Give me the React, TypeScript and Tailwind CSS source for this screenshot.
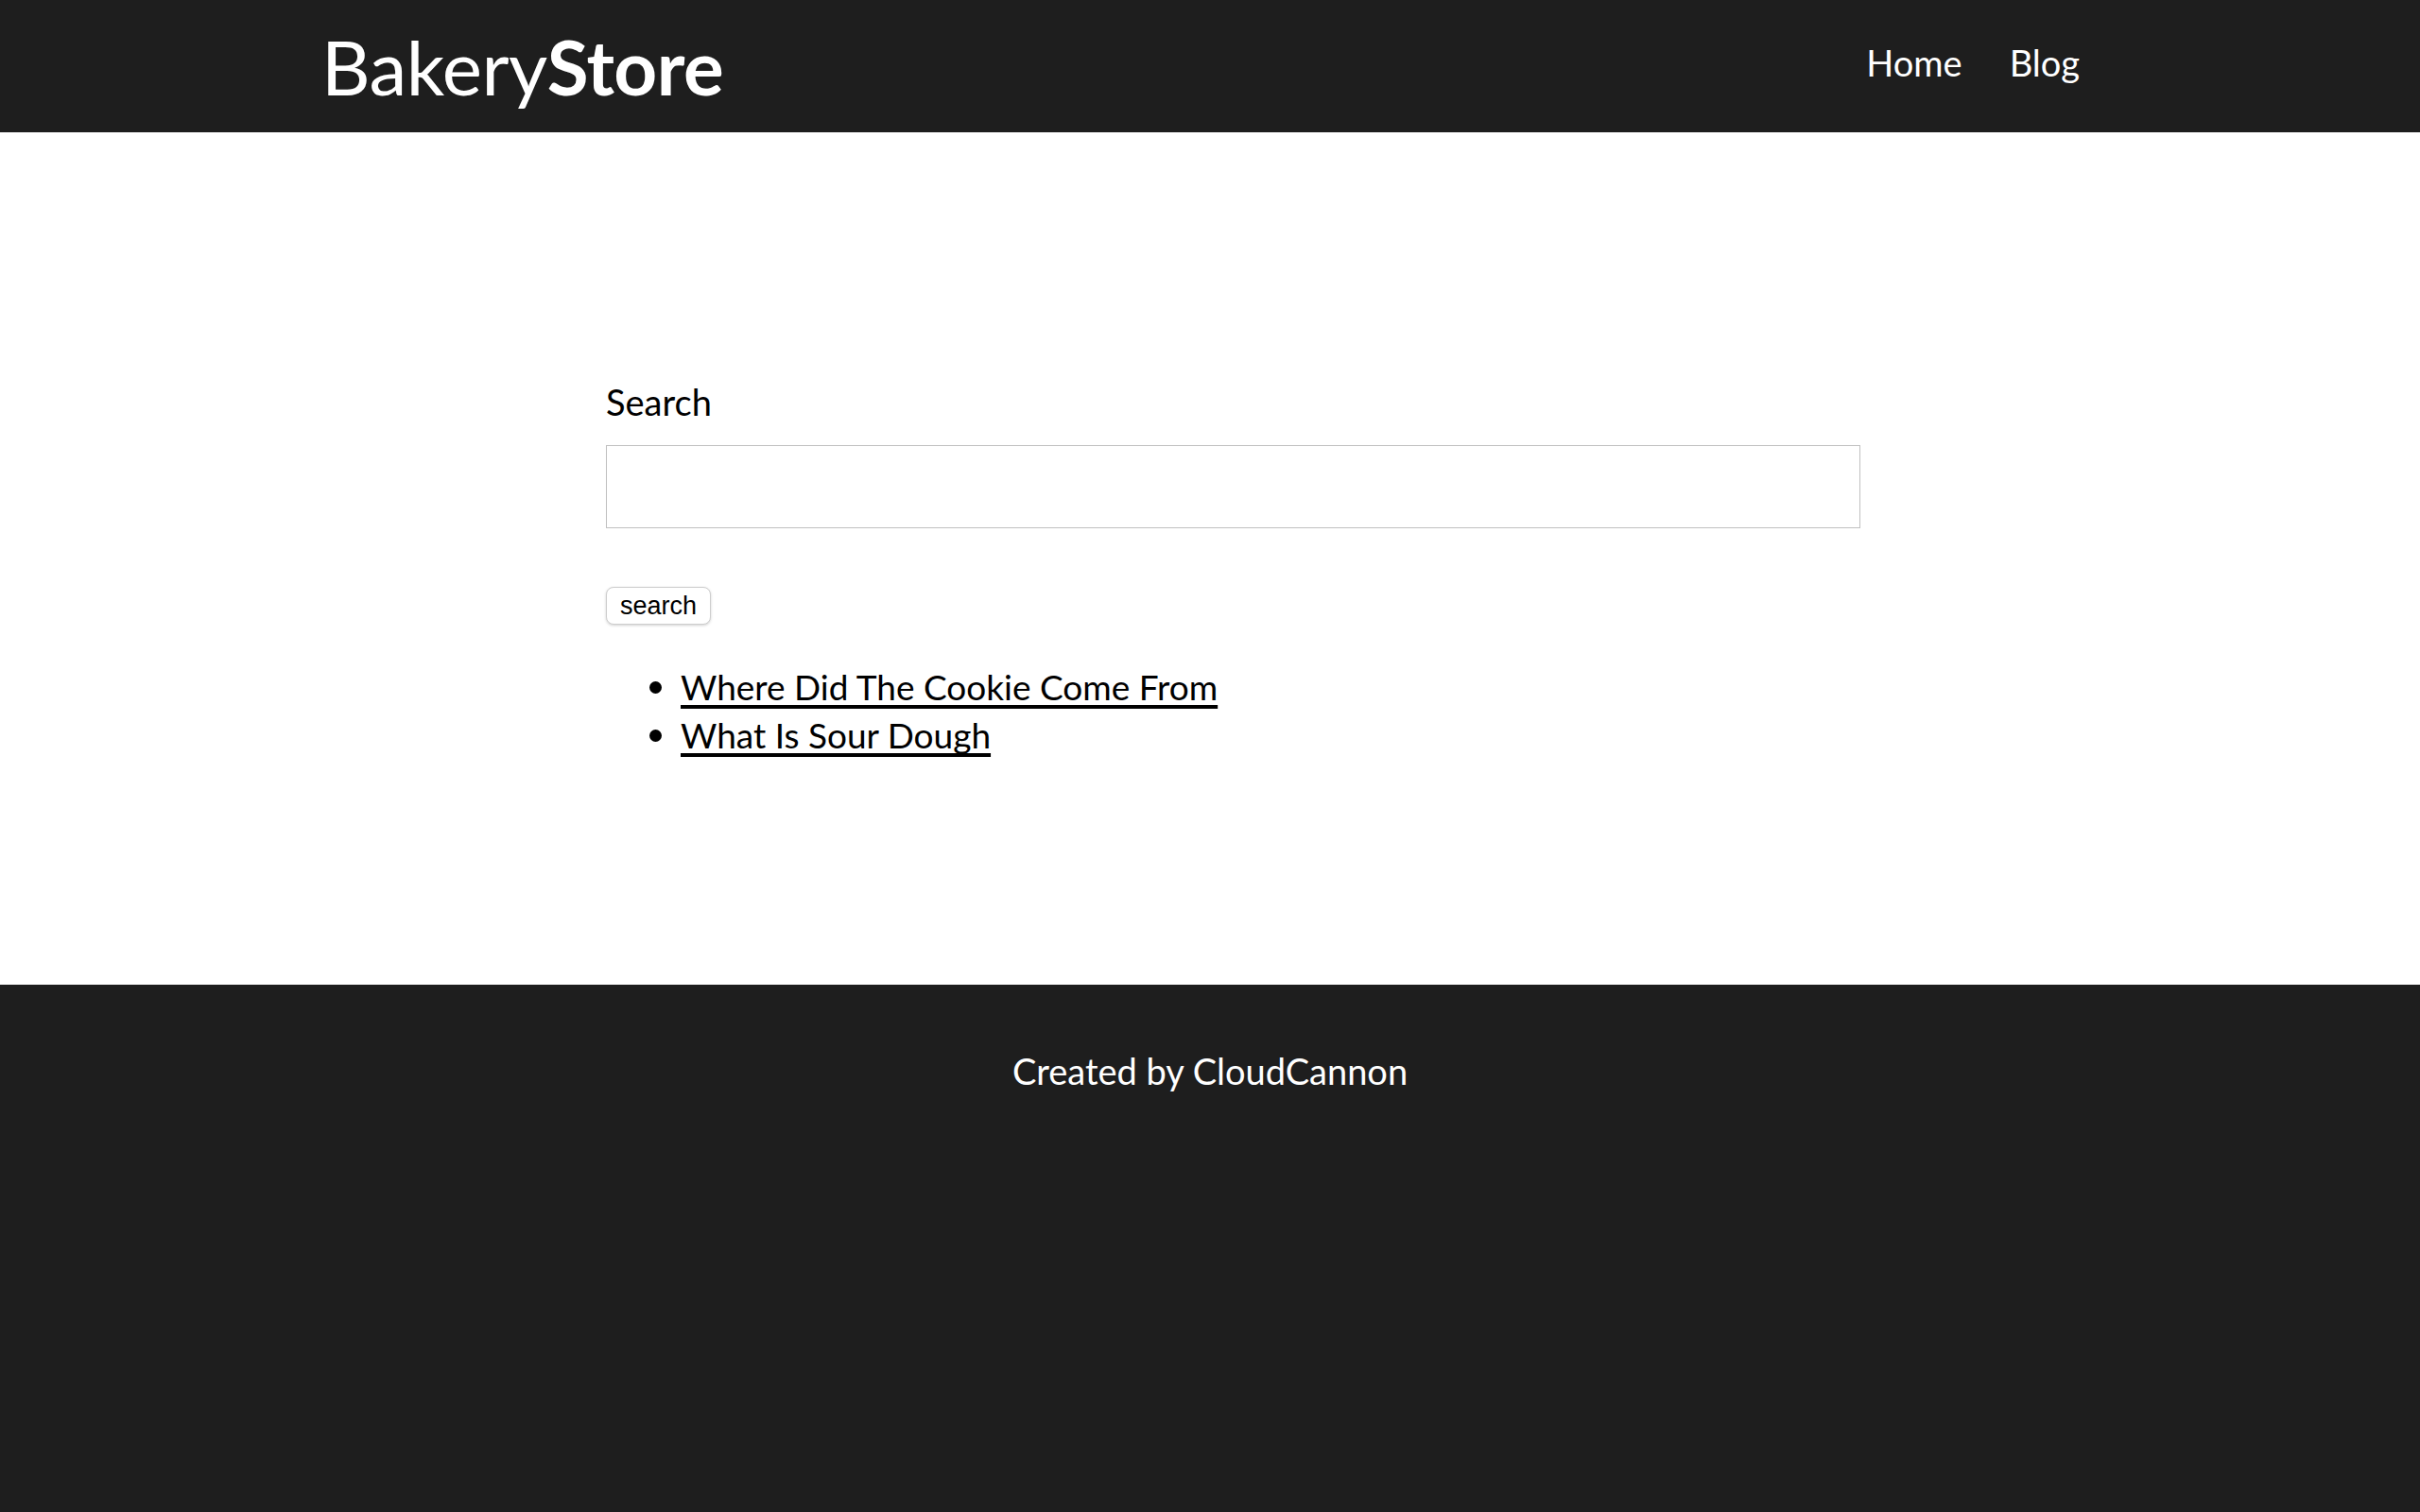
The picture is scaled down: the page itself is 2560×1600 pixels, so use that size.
export default function App() {
  const posts = ["Where Did The Cookie Come From", "What Is Sour Dough"];

  return (
    <div className="flex min-h-[1600px] flex-col bg-white font-['Lato',sans-serif]">
      {/* Header */}
      <header className="flex h-[140px] items-center justify-between bg-[#1e1e1e] pl-[340px] pr-[360px] text-white">
        <a href="#" className="text-[80px] leading-none tracking-[-0.5px]">
          Bakery<strong className="font-bold">Store</strong>
        </a>
        <nav className="flex gap-[50px] pb-[8px] text-[38px] leading-none">
          <a href="#">Home</a>
          <a href="#">Blog</a>
        </nav>
      </header>

      {/* Search */}
      <main className="h-[902px] pl-[641px] pt-[266px]">
        <label className="block text-[38px] leading-none text-black">Search</label>
        <input
          type="text"
          className="mt-[27px] block h-[88px] w-[1327px] border border-[#c0c0c0] bg-white px-4 text-[30px] outline-none"
        />
        <button className="mt-[62px] flex h-[40px] w-[111px] items-center justify-center rounded-[8px] border border-[#cdcdcd] bg-white font-['Liberation_Sans',sans-serif] text-[27px] leading-none text-black shadow-[0_1px_3px_rgba(0,0,0,0.18)]">
          search
        </button>
        <ul className="mt-[40px] list-disc pl-[79px] text-[37px] leading-[50px] text-black marker:text-[40px]">
          {posts.map((p) => (
            <li key={p}>
              <a
                href="#"
                className="underline decoration-[4px] underline-offset-[5px] [text-decoration-skip-ink:none]"
              >
                {p}
              </a>
            </li>
          ))}
        </ul>
      </main>

      {/* Footer */}
      <footer className="flex flex-1 justify-center bg-[#1e1e1e] pt-[72px] text-white">
        <p className="text-[38px] leading-none">Created by CloudCannon</p>
      </footer>
    </div>
  );
}
